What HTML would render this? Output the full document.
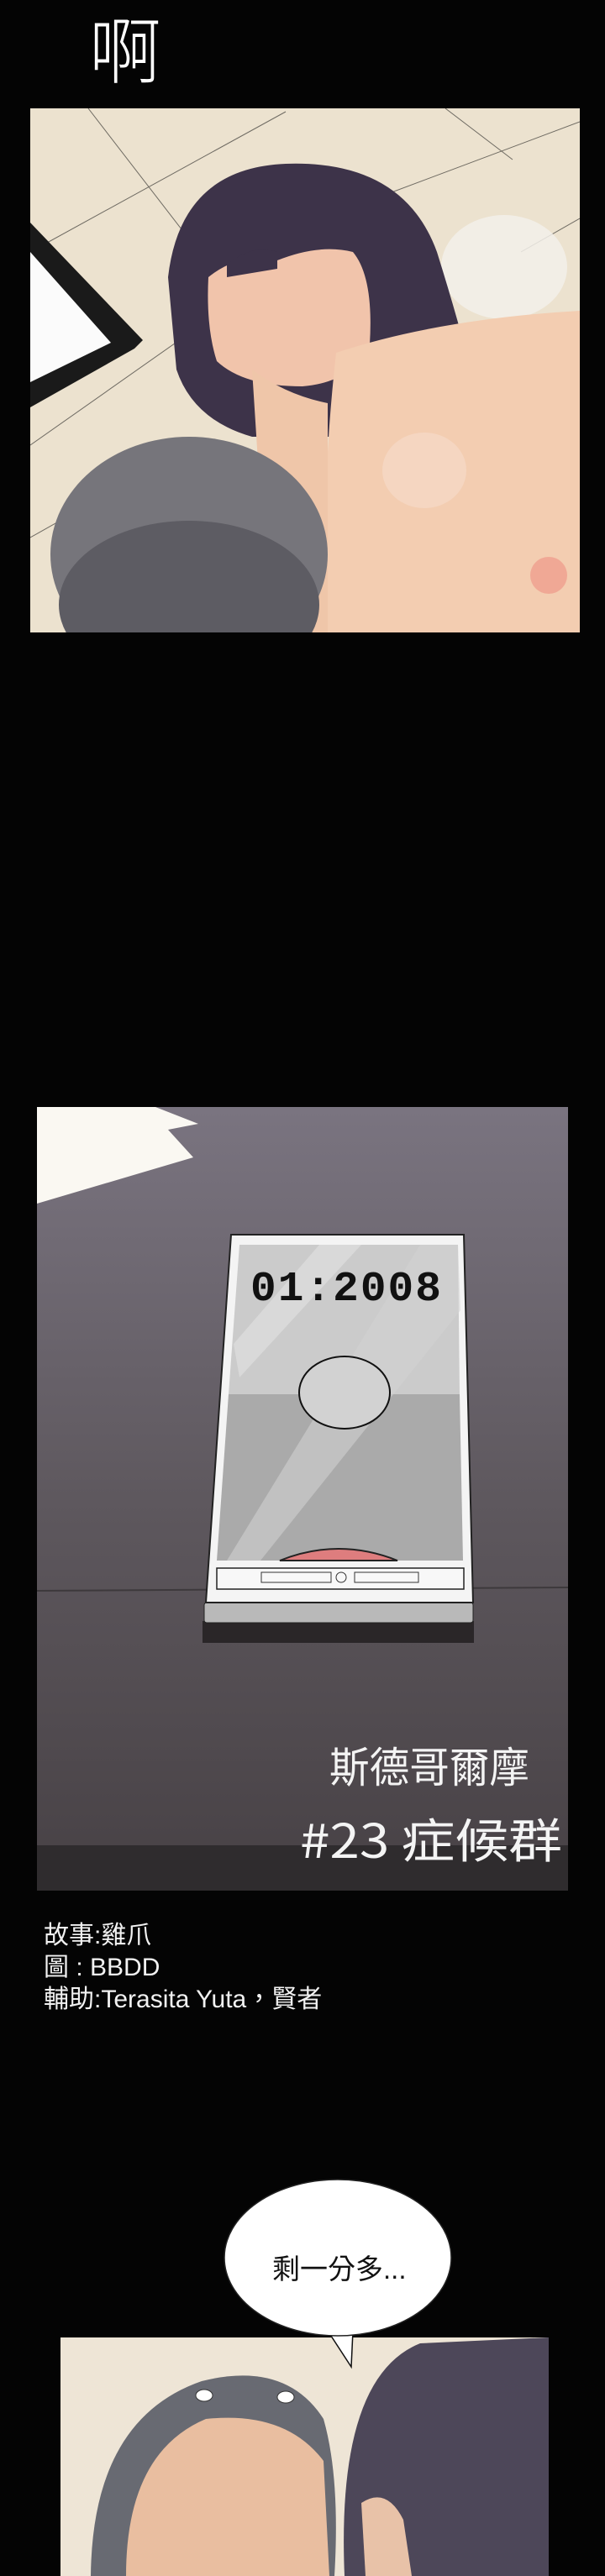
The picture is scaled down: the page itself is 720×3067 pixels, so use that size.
<!DOCTYPE html>
<html><head><meta charset="utf-8"><style>
html,body{margin:0;padding:0;background:#040404;}
body{width:720px;height:3067px;overflow:hidden;position:relative;}
svg{position:absolute;left:0;top:0;}
.cr{position:absolute;left:52px;top:2286px;color:#f2f2f2;font:30px/38px "Liberation Sans","Noto Sans CJK TC",sans-serif;}
</style></head><body>
<svg width="720" height="3067" viewBox="0 0 720 3067">
<defs>
<linearGradient id="tbl" x1="0" y1="0" x2="0" y2="1">
<stop offset="0" stop-color="#7a7480"/><stop offset="0.5" stop-color="#5e585e"/><stop offset="1" stop-color="#474145"/>
</linearGradient>
<clipPath id="p1"><rect x="36" y="129" width="654" height="624"/></clipPath>
<clipPath id="p3"><rect x="72" y="2783" width="581" height="284"/></clipPath>
</defs>
<text x="106" y="92" fill="#fff" font-family="'WenQuanYi Zen Hei','Noto Sans CJK TC',sans-serif" font-size="86" font-weight="300">啊</text>
<g clip-path="url(#p1)">
<rect x="36" y="129" width="654" height="624" fill="#ece2cf"/>
<g stroke="#6e6a62" stroke-width="1" fill="none">
<line x1="105" y1="129" x2="260" y2="330"/><line x1="36" y1="300" x2="340" y2="133"/>
<line x1="36" y1="530" x2="320" y2="330"/><line x1="260" y1="330" x2="420" y2="560"/>
<line x1="530" y1="129" x2="610" y2="190"/><line x1="450" y1="235" x2="690" y2="145"/>
<line x1="620" y1="300" x2="690" y2="260"/><line x1="36" y1="640" x2="160" y2="570"/>
</g>
<polygon points="36,265 170,405 160,415 36,485" fill="#1a1a1a"/>
<polygon points="36,300 132,408 36,455" fill="#fbfbfb"/>
<ellipse cx="600" cy="318" rx="75" ry="62" fill="#f3f0ea" opacity="0.85"/>
<path d="M200 330 Q215 200 340 195 Q480 190 520 300 Q545 380 560 440 Q580 500 540 520 L300 520 Q230 500 210 440 Z" fill="#3d3349"/>
<path d="M248 330 Q285 300 330 310 Q380 290 420 300 Q445 330 440 410 Q420 455 360 460 Q290 460 258 430 Q245 390 248 330 Z" fill="#f1c4ab"/>
<path d="M270 315 Q300 290 330 300 L330 320 L270 330 Z" fill="#3d3349"/>
<path d="M400 420 Q520 380 690 370 L690 753 L390 753 Q380 600 400 420 Z" fill="#f3cdb1"/>
<path d="M300 440 Q340 470 390 480 L390 753 L320 753 Z" fill="#efc6a9"/>
<ellipse cx="505" cy="560" rx="50" ry="45" fill="#f6dccb" opacity="0.6"/>
<circle cx="653" cy="685" r="22" fill="#f0a895"/>
<ellipse cx="225" cy="660" rx="165" ry="140" fill="#76757b"/>
<ellipse cx="225" cy="720" rx="155" ry="100" fill="#5d5c63"/>
</g>
<rect x="44" y="1318" width="632" height="933" fill="url(#tbl)"/>
<rect x="44" y="2197" width="632" height="54" fill="#2f2c2e"/>
<line x1="44" y1="1894" x2="676" y2="1890" stroke="#3d393c" stroke-width="2"/>
<polygon points="44,1318 185,1318 236,1338 200,1345 230,1378 44,1433" fill="#faf8f2"/>
<rect x="241" y="1930" width="323" height="26" fill="#2a2628"/>
<rect x="243" y="1908" width="320" height="24" rx="3" fill="#b9b9b9" stroke="#222" stroke-width="1"/>
<polygon points="275,1470 552,1470 563,1908 245,1908" fill="#f4f4f4" stroke="#222" stroke-width="2"/>
<polygon points="285,1482 545,1482 547,1660 272,1660" fill="#cbcbcb"/>
<polygon points="272,1660 547,1660 551,1858 258,1858" fill="#aaaaaa"/>
<polygon points="380,1482 430,1482 285,1640 278,1600" fill="#dedede" opacity="0.7"/>
<polygon points="500,1482 545,1482 548,1560 310,1858 270,1858" fill="#d4d4d4" opacity="0.55"/>
<path d="M333 1858 Q403 1830 473 1858 Z" fill="#de7d7e" stroke="#222" stroke-width="2"/>
<text x="298" y="1548" fill="#111" font-family="'Liberation Mono',monospace" font-size="50" font-weight="bold" letter-spacing="2" textLength="229" lengthAdjust="spacingAndGlyphs">01:2008</text>
<ellipse cx="410" cy="1658" rx="54" ry="43" fill="#d2d2d2" stroke="#111" stroke-width="2"/>
<rect x="258" y="1867" width="294" height="25" fill="#f8f8f8" stroke="#222" stroke-width="1.5"/>
<rect x="311" y="1872" width="83" height="12" fill="none" stroke="#333"/>
<rect x="422" y="1872" width="76" height="12" fill="none" stroke="#333"/>
<circle cx="406" cy="1878" r="6" fill="none" stroke="#333"/>
<text x="392" y="2122" fill="#f4f4f4" font-family="'WenQuanYi Zen Hei','Noto Sans CJK TC',sans-serif" font-size="50" textLength="238" lengthAdjust="spacingAndGlyphs">斯德哥爾摩</text>
<text x="357" y="2212" fill="#f4f4f4" font-family="'WenQuanYi Zen Hei','Noto Sans CJK TC',sans-serif" font-size="56" textLength="312" lengthAdjust="spacingAndGlyphs">#23 症候群</text>
<g clip-path="url(#p3)">
<rect x="72" y="2783" width="581" height="284" fill="#eee5d6"/>
<path d="M108 3067 Q110 2880 240 2835 Q340 2810 385 2880 Q405 2950 398 3067 Z" fill="#686a72"/>
<path d="M150 3067 Q150 2920 245 2880 Q340 2870 385 2930 L392 3067 Z" fill="#e9bea0"/>
<path d="M410 3067 Q400 2830 500 2790 L653 2783 L653 3067 Z" fill="#4d4759"/>
<path d="M430 2980 Q460 2960 480 3000 L490 3067 L435 3067 Z" fill="#e8c2a8"/>
<ellipse cx="243" cy="2852" rx="10" ry="7" fill="#fff" stroke="#333"/><ellipse cx="340" cy="2854" rx="10" ry="7" fill="#fff" stroke="#333"/>
</g>
<polygon points="390,2775 420,2775 418,2818" fill="#fff" stroke="#111" stroke-width="1.5"/>
<ellipse cx="402" cy="2688" rx="135" ry="93" fill="#fff" stroke="#222" stroke-width="1.5"/>
<polygon points="392,2770 420,2770 417,2778 395,2779" fill="#fff"/>
<text x="324" y="2713" fill="#111" font-family="'Liberation Sans','Noto Sans CJK TC',sans-serif" font-size="33">剩一分多...</text>
</svg>
<div class="cr">故事:雞爪<br>圖 : BBDD<br>輔助:Terasita Yuta，賢者</div>
</body></html>
